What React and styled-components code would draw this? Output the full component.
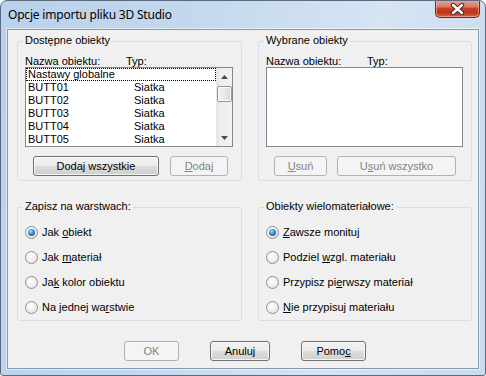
import styled, { createGlobalStyle } from "styled-components";

const GlobalStyle = createGlobalStyle`
  html, body {
    margin: 0;
    padding: 0;
    background: #ffffff;
  }
  body {
    font-family: "Liberation Sans", Arial, sans-serif;
    font-size: 11px;
    color: #000;
  }
`;

const Window = styled.div`
  width: 486px;
  height: 376px;
  box-sizing: border-box;
  border: 1px solid #5b6a7c;
  border-radius: 7px 7px 3px 3px;
  background: linear-gradient(100deg, #b9d1ea 0%, #c3d8ee 35%, #d6e4f3 70%, #c8dbef 100%);
  display: flex;
  flex-direction: column;
  overflow: hidden;
`;

const TitleBar = styled.div`
  height: 28px;
  flex: none;
  display: flex;
  align-items: flex-start;
  padding-left: 7px;
`;

const Title = styled.div`
  font-family: "Noto Sans", "Open Sans", sans-serif;
  font-size: 12px;
  line-height: 28px;
  color: #000;
  flex: 1;
  letter-spacing: -0.2px;
`;

const CloseBtn = styled.div`
  width: 45px;
  height: 18px;
  margin-top: -1px;
  margin-right: 5px;
  box-sizing: border-box;
  border: 1px solid #6b2b22;
  border-top: none;
  border-radius: 0 0 5px 5px;
  background: linear-gradient(180deg, #e8aa9c 0%, #d77a62 40%, #c63f22 50%, #c0341a 75%, #d8694a 100%);
  box-shadow: inset 0 0 0 1px rgba(255, 220, 210, 0.45);
  display: flex;
  align-items: center;
  justify-content: center;
`;

const Client = styled.div`
  flex: 1;
  margin: 0 6px 6px 6px;
  border: 1px solid #8399b3;
  box-shadow: 0 0 0 1px rgba(255, 255, 255, 0.55);
  background: #f0f0f0;
  padding: 11px 0 0 9px;
  display: flex;
  flex-direction: column;
`;

const Groups = styled.div`
  display: grid;
  grid-template-columns: 225px 214px;
  grid-template-rows: 140px 114px;
  column-gap: 16px;
  row-gap: 26px;
`;

const Group = styled.div`
  position: relative;
  box-sizing: border-box;
  border: 1px solid #d5dfe5;
  border-radius: 3px;
  padding: ${(p) => (p.$radios ? "18px 8px 0 7px" : "13px 8px 0 7px")};
  display: flex;
  flex-direction: column;
  gap: ${(p) => (p.$radios ? "12px" : "0")};
`;

const Legend = styled.span`
  position: absolute;
  top: -8px;
  left: 5px;
  padding: 0 2px;
  background: #f0f0f0;
  line-height: 13px;
  white-space: nowrap;
`;

const ColHeader = styled.div`
  display: flex;
  line-height: 12px;
  height: 12px;
`;

const ColName = styled.span`
  width: 101px;
  flex: none;
`;

const ListBox = styled.div`
  height: 80px;
  box-sizing: border-box;
  border: 1px solid #828790;
  background: #fff;
  display: flex;
`;

const Items = styled.div`
  flex: 1;
  display: flex;
  flex-direction: column;
  overflow: hidden;
`;

const Item = styled.div`
  height: 13px;
  box-sizing: border-box;
  line-height: 13px;
  display: flex;
  padding: 0 2px;
  white-space: nowrap;
  ${(p) =>
    p.$focus &&
    `
    border: 1px dotted #000;
    line-height: 11px;
    padding: 0 1px;
  `}
`;

const ItemName = styled.span`
  width: 106px;
  flex: none;
`;

const ScrollBar = styled.div`
  width: 15px;
  flex: none;
  background: linear-gradient(90deg, #e3e3e3 0%, #eeeeee 20%, #f2f2f2 100%);
  border-left: 1px solid #e8e8e8;
  display: flex;
  flex-direction: column;
`;

const ScrollArrow = styled.div`
  height: 17px;
  flex: none;
  display: flex;
  align-items: center;
  justify-content: center;
`;

const Thumb = styled.div`
  height: 16px;
  margin: 1px 0 0 0;
  box-sizing: border-box;
  border: 1px solid #979797;
  border-radius: 2px;
  background: linear-gradient(90deg, #f2f2f2 0%, #e9e9e9 50%, #d8d8d8 100%);
  box-shadow: inset 0 0 0 1px rgba(255, 255, 255, 0.8);
`;

const Spacer = styled.div`
  flex: 1;
`;

const ButtonRow = styled.div`
  display: flex;
  padding-left: ${(p) => p.$left}px;
  margin-top: ${(p) => p.$top}px;
  gap: ${(p) => p.$gap}px;
`;

const Button = styled.div`
  width: ${(p) => p.$w}px;
  height: 20px;
  box-sizing: border-box;
  border: 1px solid ${(p) => (p.$disabled ? "#adb2b5" : "#707070")};
  border-radius: 3px;
  background: ${(p) =>
    p.$disabled
      ? "#f4f4f4"
      : "linear-gradient(180deg, #f2f2f2 0%, #ebebeb 50%, #dddddd 51%, #cfcfcf 100%)"};
  box-shadow: ${(p) => (p.$disabled ? "none" : "inset 0 0 0 1px rgba(255,255,255,0.75)")};
  color: ${(p) => (p.$disabled ? "#838383" : "#000")};
  display: flex;
  align-items: center;
  justify-content: center;
  line-height: 13px;
  white-space: nowrap;
`;

const RadioRow = styled.label`
  display: flex;
  align-items: center;
  height: 13px;
  gap: 4px;
  line-height: 13px;
  white-space: nowrap;
`;

const RadioCircle = styled.span`
  width: 13px;
  height: 13px;
  flex: none;
  box-sizing: border-box;
  border-radius: 50%;
  border: 1px solid #8e8f8f;
  background: radial-gradient(circle at 40% 35%, #fdfdfd 0%, #eeeeee 55%, #d4d4d4 100%);
  display: flex;
  align-items: center;
  justify-content: center;
  &::after {
    content: "";
    display: ${(p) => (p.$checked ? "block" : "none")};
    width: 7px;
    height: 7px;
    border-radius: 50%;
    background: radial-gradient(circle at 40% 35%, #a6e1fb 0%, #2b8ad0 45%, #0f4f8f 100%);
  }
`;

const Mn = styled.span`
  text-decoration: underline;
  text-underline-offset: 1px;
`;

const Triangle = ({ down }) => (
  <svg width="7" height="4" viewBox="0 0 7 4">
    <path d={down ? "M0 0 H7 L3.5 4 Z" : "M0 4 H7 L3.5 0 Z"} fill="#4d4d4d" />
  </svg>
);

const Radio = ({ checked, children }) => (
  <RadioRow>
    <RadioCircle $checked={checked} />
    <span>{children}</span>
  </RadioRow>
);

const objects = ["BUTT01", "BUTT02", "BUTT03", "BUTT04", "BUTT05"];

export default function App() {
  return (
    <>
      <GlobalStyle />
      <Window>
        <TitleBar>
          <Title>Opcje importu pliku 3D Studio</Title>
          <CloseBtn>
            <svg width="15" height="12" viewBox="0 0 15 12">
              <path d="M3 2 L12 10 M12 2 L3 10" stroke="#4a2320" strokeWidth="4.4" strokeLinecap="round" />
              <path d="M3 2 L12 10 M12 2 L3 10" stroke="#ffffff" strokeWidth="2.4" strokeLinecap="round" />
            </svg>
          </CloseBtn>
        </TitleBar>
        <Client>
          <Groups>
            <Group>
              <Legend>Dostępne obiekty</Legend>
              <ColHeader>
                <ColName>Nazwa obiektu:</ColName>
                <span>Typ:</span>
              </ColHeader>
              <ListBox>
                <Items>
                  <Item $focus>
                    <ItemName>Nastawy globalne</ItemName>
                  </Item>
                  {objects.map((o) => (
                    <Item key={o}>
                      <ItemName>{o}</ItemName>
                      <span>Siatka</span>
                    </Item>
                  ))}
                </Items>
                <ScrollBar>
                  <ScrollArrow>
                    <Triangle />
                  </ScrollArrow>
                  <Thumb />
                  <Spacer />
                  <ScrollArrow>
                    <Triangle down />
                  </ScrollArrow>
                </ScrollBar>
              </ListBox>
              <ButtonRow $left={8} $top={9} $gap={11}>
                <Button $w={126}>
                  <span>
                    Doda<Mn>j</Mn> wszystkie
                  </span>
                </Button>
                <Button $w={58} $disabled>
                  <span>
                    <Mn>D</Mn>odaj
                  </span>
                </Button>
              </ButtonRow>
            </Group>
            <Group>
              <Legend>Wybrane obiekty</Legend>
              <ColHeader>
                <ColName>Nazwa obiektu:</ColName>
                <span>Typ:</span>
              </ColHeader>
              <ListBox />
              <ButtonRow $left={8} $top={9} $gap={10}>
                <Button $w={53} $disabled>
                  <span>
                    <Mn>U</Mn>suń
                  </span>
                </Button>
                <Button $w={119} $disabled>
                  <span>
                    U<Mn>s</Mn>uń wszystko
                  </span>
                </Button>
              </ButtonRow>
            </Group>
            <Group $radios>
              <Legend>Zapisz na warstwach:</Legend>
              <Radio checked>
                Jak <Mn>o</Mn>biekt
              </Radio>
              <Radio>
                Jak <Mn>m</Mn>ateriał
              </Radio>
              <Radio>
                Ja<Mn>k</Mn> kolor obiektu
              </Radio>
              <Radio>
                Na jednej wa<Mn>r</Mn>stwie
              </Radio>
            </Group>
            <Group $radios>
              <Legend>Obiekty wielomateriałowe:</Legend>
              <Radio checked>
                <Mn>Z</Mn>awsze monituj
              </Radio>
              <Radio>
                Podziel <Mn>w</Mn>zgl. materiału
              </Radio>
              <Radio>
                Przypisz pi<Mn>e</Mn>rwszy materiał
              </Radio>
              <Radio>
                <Mn>N</Mn>ie przypisuj materiału
              </Radio>
            </Group>
          </Groups>
          <ButtonRow $left={107} $top={20} $gap={31}>
            <Button $w={55} $disabled>
              OK
            </Button>
            <Button $w={60}>Anuluj</Button>
            <Button $w={65}>
              <span>
                Pomo<Mn>c</Mn>
              </span>
            </Button>
          </ButtonRow>
        </Client>
      </Window>
    </>
  );
}
